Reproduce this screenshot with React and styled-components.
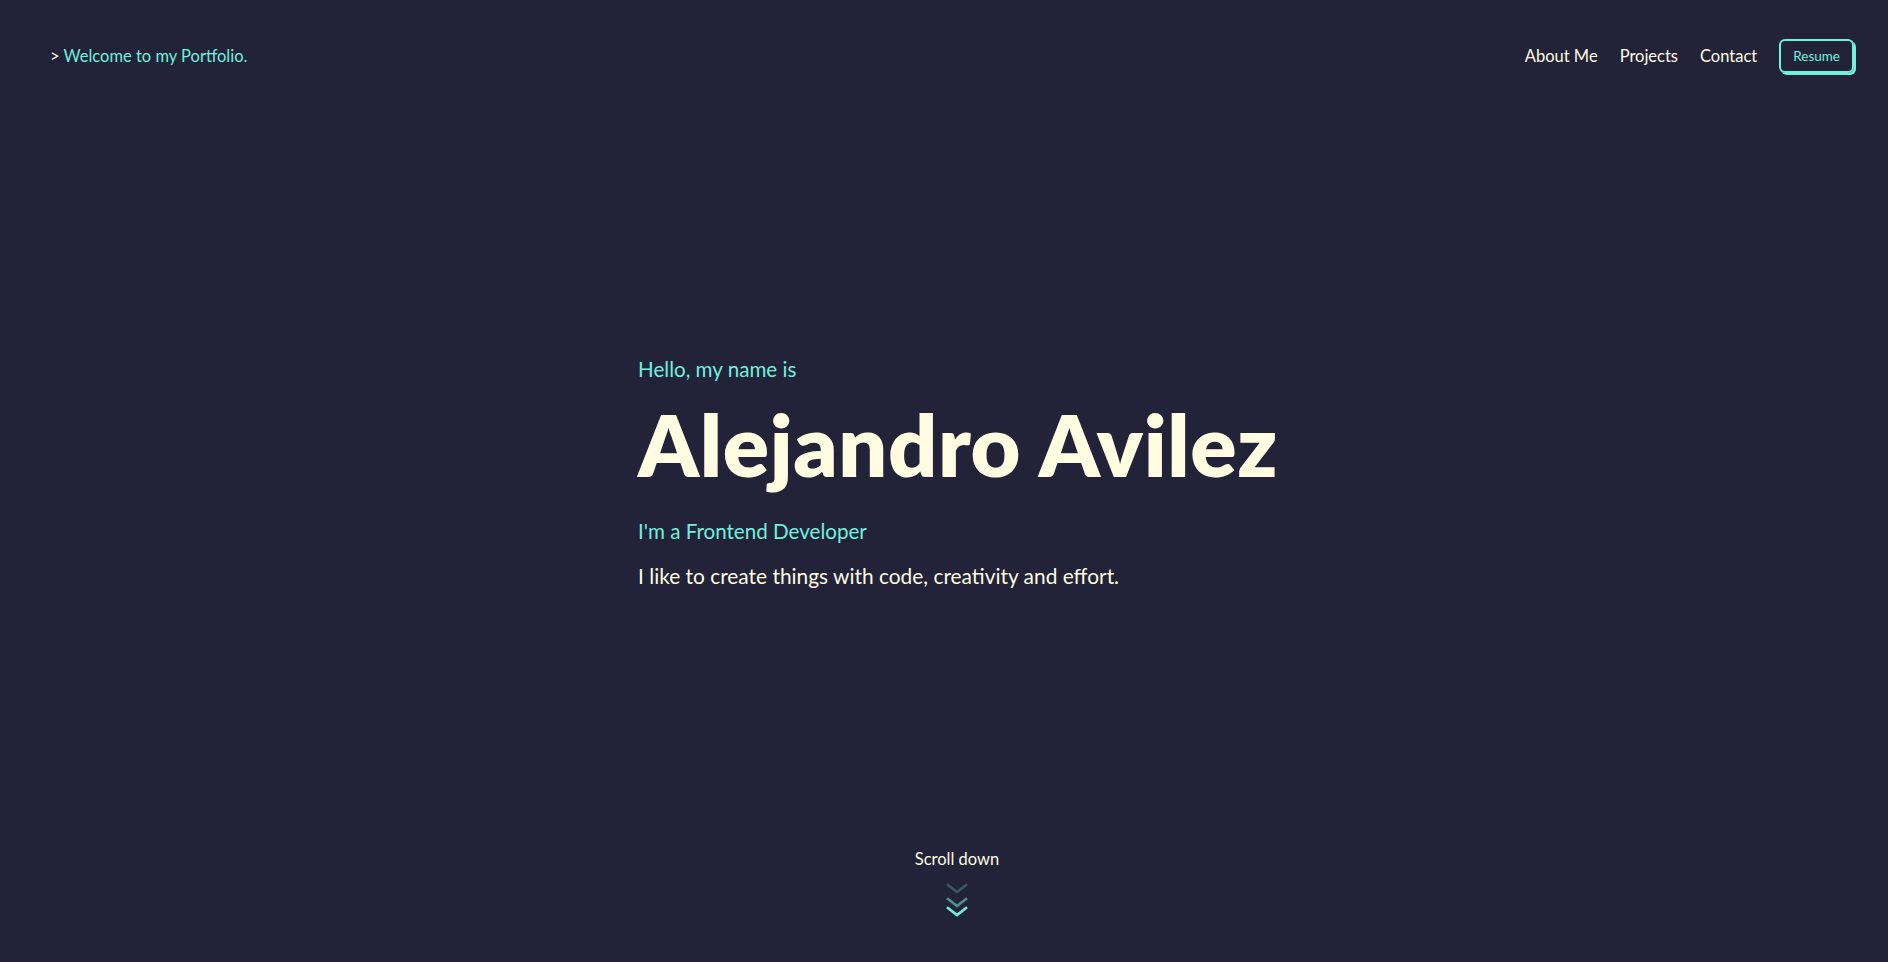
import React from 'react'
import styled, { createGlobalStyle } from 'styled-components'

const teal = '#72efdd'
const cream = '#fffce1'

const Global = createGlobalStyle`
  * { box-sizing: border-box; }
  html, body {
    margin: 0;
    padding: 0;
    background: #222239;
  }
  body {
    font-family: Lato, "Noto Sans", sans-serif;
    color: ${cream};
  }
`

const Page = styled.div`
  height: 100vh;
  display: flex;
  flex-direction: column;
  background: #222239;
`

const Header = styled.header`
  display: flex;
  justify-content: space-between;
  align-items: center;
  padding: 37px 34px 0 50px;
  height: 75px;
`

const Greeting = styled.p`
  margin: 0;
  font-size: 16.5px;
  color: ${teal};
  span {
    color: ${cream};
    margin-right: 4px;
  }
`

const Nav = styled.nav`
  display: flex;
  align-items: center;
  gap: 22px;
  a {
    color: ${cream};
    text-decoration: none;
    font-size: 16.5px;
  }
`

const ResumeButton = styled.button`
  height: 34px;
  padding: 0 12px;
  background: transparent;
  color: ${teal};
  font-family: inherit;
  font-size: 13.5px;
  border: 2px solid ${teal};
  border-radius: 6px;
  box-shadow: 2px 2px 0 ${teal};
  cursor: pointer;
`

const Hero = styled.main`
  flex: 1;
  width: 612px;
  margin: 0 auto;
  padding-top: 282px;
`

const Intro = styled.p`
  margin: 0;
  font-size: 20.6px;
  line-height: 24px;
  color: ${teal};
`

const Name = styled.h1`
  margin: 13px 0 25px;
  font-size: 86px;
  line-height: 100px;
  font-weight: 800;
  letter-spacing: 0.6px;
  white-space: nowrap;
  color: ${cream};
`

const Role = styled(Intro)``

const Blurb = styled.p`
  margin: 21px 0 0;
  font-size: 20.9px;
  line-height: 24px;
  color: ${cream};
`

const ScrollHint = styled.div`
  display: flex;
  flex-direction: column;
  align-items: center;
  padding: 0 0 44px 26px;
  font-size: 16.5px;
  color: ${cream};
  svg {
    margin-top: 13px;
  }
`

const Chevrons = () => (
  <svg width="24" height="36" viewBox="0 0 24 36" fill="none" strokeWidth="2.6" strokeLinecap="square">
    <polyline points="3,3 12,10 21,3" stroke="#3a5866" />
    <polyline points="3,17 12,24 21,17" stroke="#4e8f8f" />
    <polyline points="3,26 12,33 21,26" stroke={teal} />
  </svg>
)

export default function App() {
  return (
    <Page>
      <Global />
      <Header>
        <Greeting><span>&gt;</span>Welcome to my Portfolio.</Greeting>
        <Nav>
          <a href="#about">About Me</a>
          <a href="#projects">Projects</a>
          <a href="#contact">Contact</a>
          <ResumeButton>Resume</ResumeButton>
        </Nav>
      </Header>
      <Hero>
        <Intro>Hello, my name is</Intro>
        <Name>Alejandro Avilez</Name>
        <Role>I'm a Frontend Developer</Role>
        <Blurb>I like to create things with code, creativity and effort.</Blurb>
      </Hero>
      <ScrollHint>
        Scroll down
        <Chevrons />
      </ScrollHint>
    </Page>
  )
}
